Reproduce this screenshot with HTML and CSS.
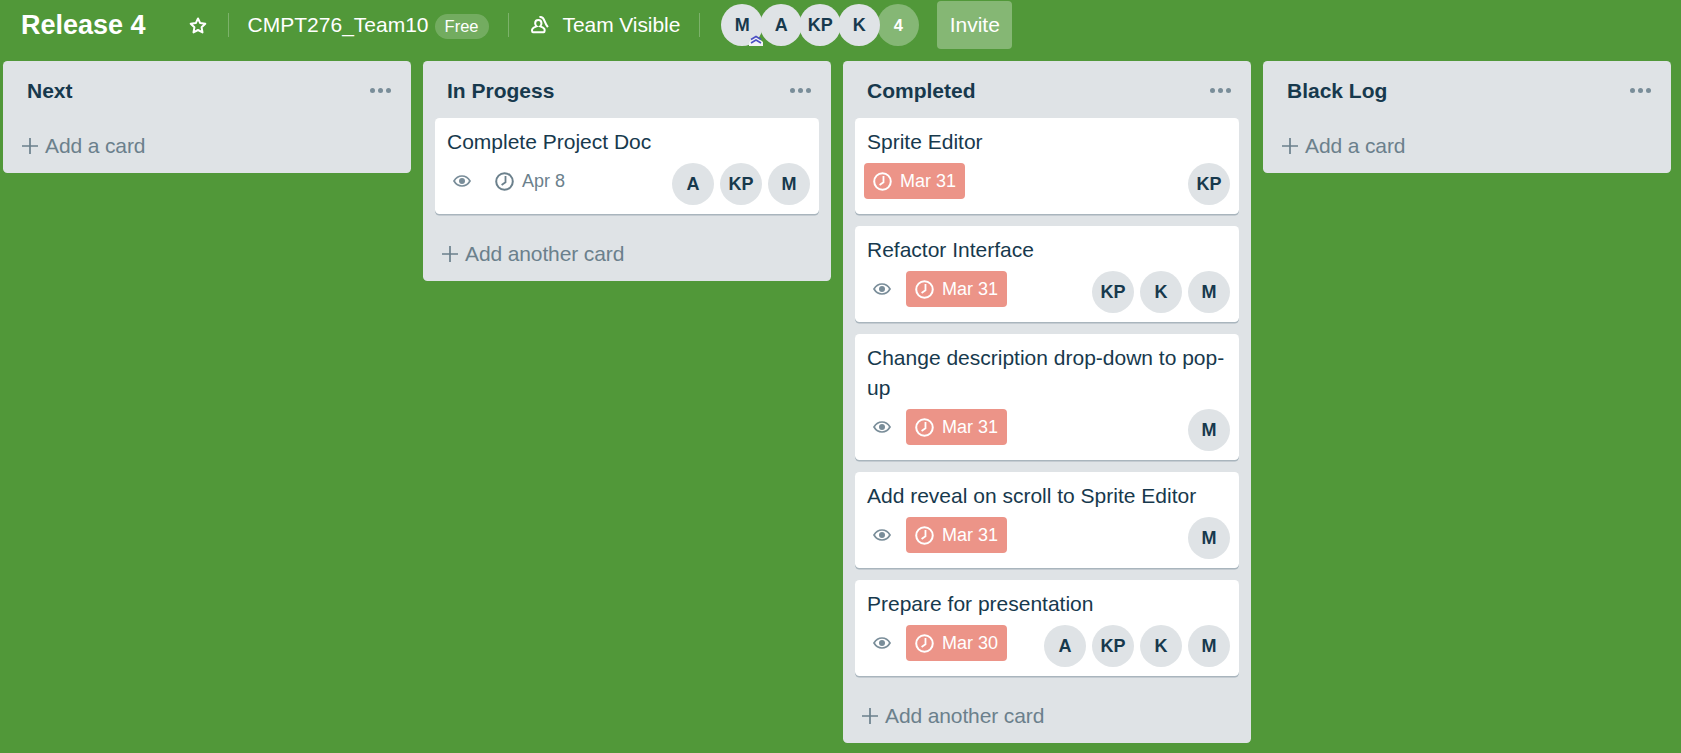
FILE: index.html
```html
<!DOCTYPE html>
<html lang="en">
<head>
<meta charset="utf-8">
<title>Release 4</title>
<link rel="stylesheet" href="styles.css">
</head>
<body>
<svg class="sprites" xmlns="http://www.w3.org/2000/svg">
  <symbol id="i-clock" viewBox="0 0 19 19"><circle cx="9.500" cy="9.500" r="8.300" fill="none" stroke="currentColor" stroke-width="2"/><path d="M10.500 4V10.200L6.600 13" fill="none" stroke="currentColor" stroke-width="1.800"/></symbol>
  <symbol id="i-eye" viewBox="0 0 18 12"><path d="M1 6C3 2.600 5.800 1 9 1s6 1.600 8 5c-2 3.400-4.800 5-8 5S3 9.400 1 6Z" fill="none" stroke="currentColor" stroke-width="1.700"/><circle cx="9" cy="6" r="3" fill="currentColor"/></symbol>
  <symbol id="i-plus" viewBox="0 0 16 16"><path d="M8 0V16M0 8H16" stroke="currentColor" stroke-width="1.700" fill="none"/></symbol>
</svg>

<header class="topbar">
  <h1 class="board-name">Release 4</h1>
  <svg class="star" viewBox="0 0 18 17"><path d="M9 1.500 11.200 6.100 16.300 6.800 12.600 10.300 13.500 15.400 9 13 4.500 15.400 5.400 10.300 1.700 6.800 6.800 6.100Z" fill="none" stroke="#fff" stroke-width="2" stroke-linejoin="round"/></svg>
  <span class="divider"></span>
  <span class="bar-text team-name">CMPT276_Team10</span>
  <span class="free">Free</span>
  <span class="divider divider-b"></span>
  <svg class="team-icon" viewBox="0 0 16 16"><path d="M6.500 3.500c1.800 0 2.800 1.300 2.800 3 0 1.200-.5 2.100-1.100 2.700 1.700.5 3.100 1.300 3.600 2.200.5.900.4 3-.4 3H1.700c-.9 0-1-2-.4-3 .5-.9 1.900-1.700 3.600-2.200-.7-.6-1.200-1.500-1.200-2.700 0-1.700 1-3 2.800-3Z" fill="none" stroke="#fff" stroke-width="1.800"/><path d="M7.500 1c2.400-.6 3.600.8 4.500 3.300.7 1.900 1.700 3.800 3 5.500" fill="none" stroke="#fff" stroke-width="1.800"/></svg>
  <span class="bar-text visible-text">Team Visible</span>
  <span class="divider divider-c"></span>
  <div class="members">
    <span class="avatar avatar-top">M<svg class="admin" viewBox="0 0 14 13"><path d="M0 13V9L7 3 14 9V13Z" fill="#f2f3f5"/><path d="M2 6.500 7 3.500 12 6.500M2 10 7 7 12 10" fill="none" stroke="#4b4fc4" stroke-width="1.600"/></svg></span>
    <span class="avatar avatar-top">A</span>
    <span class="avatar avatar-top">KP</span>
    <span class="avatar avatar-top">K</span>
    <span class="avatar more">4</span>
  </div>
  <span class="invite">Invite</span>
</header>

<main class="board">
  <section class="list">
    <div class="list-head"><h2>Next</h2><span class="dots"><i></i><i></i><i></i></span></div>
    <div class="add"><svg class="plus"><use href="#i-plus"/></svg>Add a card</div>
  </section>

  <section class="list">
    <div class="list-head"><h2>In Progess</h2><span class="dots"><i></i><i></i><i></i></span></div>
    <article class="card">
      <div class="card-title">Complete Project Doc</div>
      <div class="meta">
        <div class="badges">
          <span class="eye"><svg><use href="#i-eye"/></svg></span>
          <span class="date"><svg><use href="#i-clock"/></svg>Apr 8</span>
        </div>
        <div class="people"><span class="avatar">A</span><span class="avatar">KP</span><span class="avatar">M</span></div>
      </div>
    </article>
    <div class="add"><svg class="plus"><use href="#i-plus"/></svg>Add another card</div>
  </section>

  <section class="list">
    <div class="list-head"><h2>Completed</h2><span class="dots"><i></i><i></i><i></i></span></div>
    <article class="card">
      <div class="card-title">Sprite Editor</div>
      <div class="meta">
        <div class="badges">
          <span class="date overdue"><svg><use href="#i-clock"/></svg>Mar 31</span>
        </div>
        <div class="people"><span class="avatar">KP</span></div>
      </div>
    </article>
    <article class="card">
      <div class="card-title">Refactor Interface</div>
      <div class="meta">
        <div class="badges">
          <span class="eye"><svg><use href="#i-eye"/></svg></span>
          <span class="date overdue"><svg><use href="#i-clock"/></svg>Mar 31</span>
        </div>
        <div class="people"><span class="avatar">KP</span><span class="avatar">K</span><span class="avatar">M</span></div>
      </div>
    </article>
    <article class="card">
      <div class="card-title">Change description drop-down to pop-up</div>
      <div class="meta">
        <div class="badges">
          <span class="eye"><svg><use href="#i-eye"/></svg></span>
          <span class="date overdue"><svg><use href="#i-clock"/></svg>Mar 31</span>
        </div>
        <div class="people"><span class="avatar">M</span></div>
      </div>
    </article>
    <article class="card">
      <div class="card-title">Add reveal on scroll to Sprite Editor</div>
      <div class="meta">
        <div class="badges">
          <span class="eye"><svg><use href="#i-eye"/></svg></span>
          <span class="date overdue"><svg><use href="#i-clock"/></svg>Mar 31</span>
        </div>
        <div class="people"><span class="avatar">M</span></div>
      </div>
    </article>
    <article class="card">
      <div class="card-title">Prepare for presentation</div>
      <div class="meta">
        <div class="badges">
          <span class="eye"><svg><use href="#i-eye"/></svg></span>
          <span class="date overdue"><svg><use href="#i-clock"/></svg>Mar 30</span>
        </div>
        <div class="people"><span class="avatar">A</span><span class="avatar">KP</span><span class="avatar">K</span><span class="avatar">M</span></div>
      </div>
    </article>
    <div class="add"><svg class="plus"><use href="#i-plus"/></svg>Add another card</div>
  </section>

  <section class="list">
    <div class="list-head"><h2>Black Log</h2><span class="dots"><i></i><i></i><i></i></span></div>
    <div class="add"><svg class="plus"><use href="#i-plus"/></svg>Add a card</div>
  </section>
</main>
</body>
</html>
```

FILE: styles.css
```css
* { box-sizing: border-box; }

html, body { height: 100%; }

body {
  margin: 0;
  overflow: hidden;
  background: #519839;
  color: #17394d;
  font-family: "Liberation Sans", Arial, sans-serif;
  font-size: 21px;
  line-height: 30px;
}

.sprites { display: none; }

.topbar {
  display: flex;
  align-items: center;
  height: 48px;
  margin: 1px 0 12px;
  padding-left: 21px;
  color: #fff;
}

.board-name {
  margin: 0;
  font-size: 27px;
  font-weight: 700;
  line-height: 36px;
}

.star { width: 18px; height: 17px; margin-left: 43px; }

.divider {
  width: 1px;
  height: 24px;
  margin-left: 21px;
  background: rgba(255, 255, 255, .25);
}

.bar-text { font-size: 21px; line-height: 30px; }

.team-name { margin-left: 19px; }

.free {
  display: flex;
  align-items: center;
  justify-content: center;
  width: 54px;
  height: 25px;
  margin: 2px 0 0 6px;
  border-radius: 13px;
  background: rgba(255, 255, 255, .2);
  font-size: 16.5px;
}

.divider-b { margin-left: 19px; }

.team-icon { width: 18px; height: 18px; margin-left: 22px; }

.visible-text { margin-left: 14px; letter-spacing: -.08px; }

.divider-c { margin-left: 19px; }

.members { display: flex; margin-left: 21px; }

.avatar {
  display: flex;
  flex: none;
  align-items: center;
  justify-content: center;
  width: 42px;
  height: 42px;
  border-radius: 50%;
  background: #dfe3e6;
  color: #17394d;
  font-size: 18px;
  font-weight: 700;
}

.avatar-top { position: relative; margin-right: -3px; }

.more {
  background: #85b775;
  color: #fff;
  font-size: 16.5px;
}

.admin {
  position: absolute;
  right: 0;
  bottom: 0;
  width: 14px;
  height: 13px;
}

.invite {
  display: flex;
  align-items: center;
  justify-content: center;
  width: 75px;
  height: 48px;
  margin-left: 18px;
  border-radius: 4px;
  background: rgba(255, 255, 255, .3);
}

.board {
  display: flex;
  align-items: flex-start;
  gap: 12px;
  padding-left: 3px;
}

.list {
  flex: none;
  width: 408px;
  padding: 0 12px;
  border-radius: 4.5px;
  background: #dfe3e6;
}

.list-head {
  display: flex;
  align-items: center;
  justify-content: space-between;
  height: 57px;
  padding: 2px 8px 0 12px;
}

.list-head h2 {
  margin: 0;
  font-size: 21px;
  font-weight: 700;
  line-height: 30px;
}

.dots { display: flex; gap: 3px; }

.dots i {
  width: 5px;
  height: 5px;
  border-radius: 50%;
  background: #798d99;
}

.card {
  margin-bottom: 12px;
  padding: 9px;
  border-radius: 4.5px;
  background: #fff;
  box-shadow: 0 1.5px 0 rgba(9, 45, 66, .25);
}

.card-title { margin-bottom: 6px; padding: 0 3px; }

.meta {
  display: flex;
  align-items: flex-start;
  justify-content: space-between;
}

.badges { display: flex; gap: 6px; }

.eye {
  display: flex;
  align-items: center;
  justify-content: center;
  width: 36px;
  height: 36px;
  color: #798d99;
}

.eye svg { width: 18px; height: 12px; }

.date {
  display: flex;
  align-items: center;
  gap: 8px;
  height: 36px;
  padding: 0 9px;
  border-radius: 4px;
  color: #6b808c;
  font-size: 18px;
  line-height: 24px;
  white-space: nowrap;
}

.date svg { width: 19px; height: 19px; }

.overdue {
  width: 101px;
  background: #ec9488;
  color: #fff;
}

.people { display: flex; gap: 6px; }

.add {
  display: flex;
  align-items: center;
  gap: 7px;
  height: 55px;
  padding-left: 7px;
  color: #6b808c;
  letter-spacing: -.12px;
}

.plus { width: 16px; height: 16px; flex: none; }
```
